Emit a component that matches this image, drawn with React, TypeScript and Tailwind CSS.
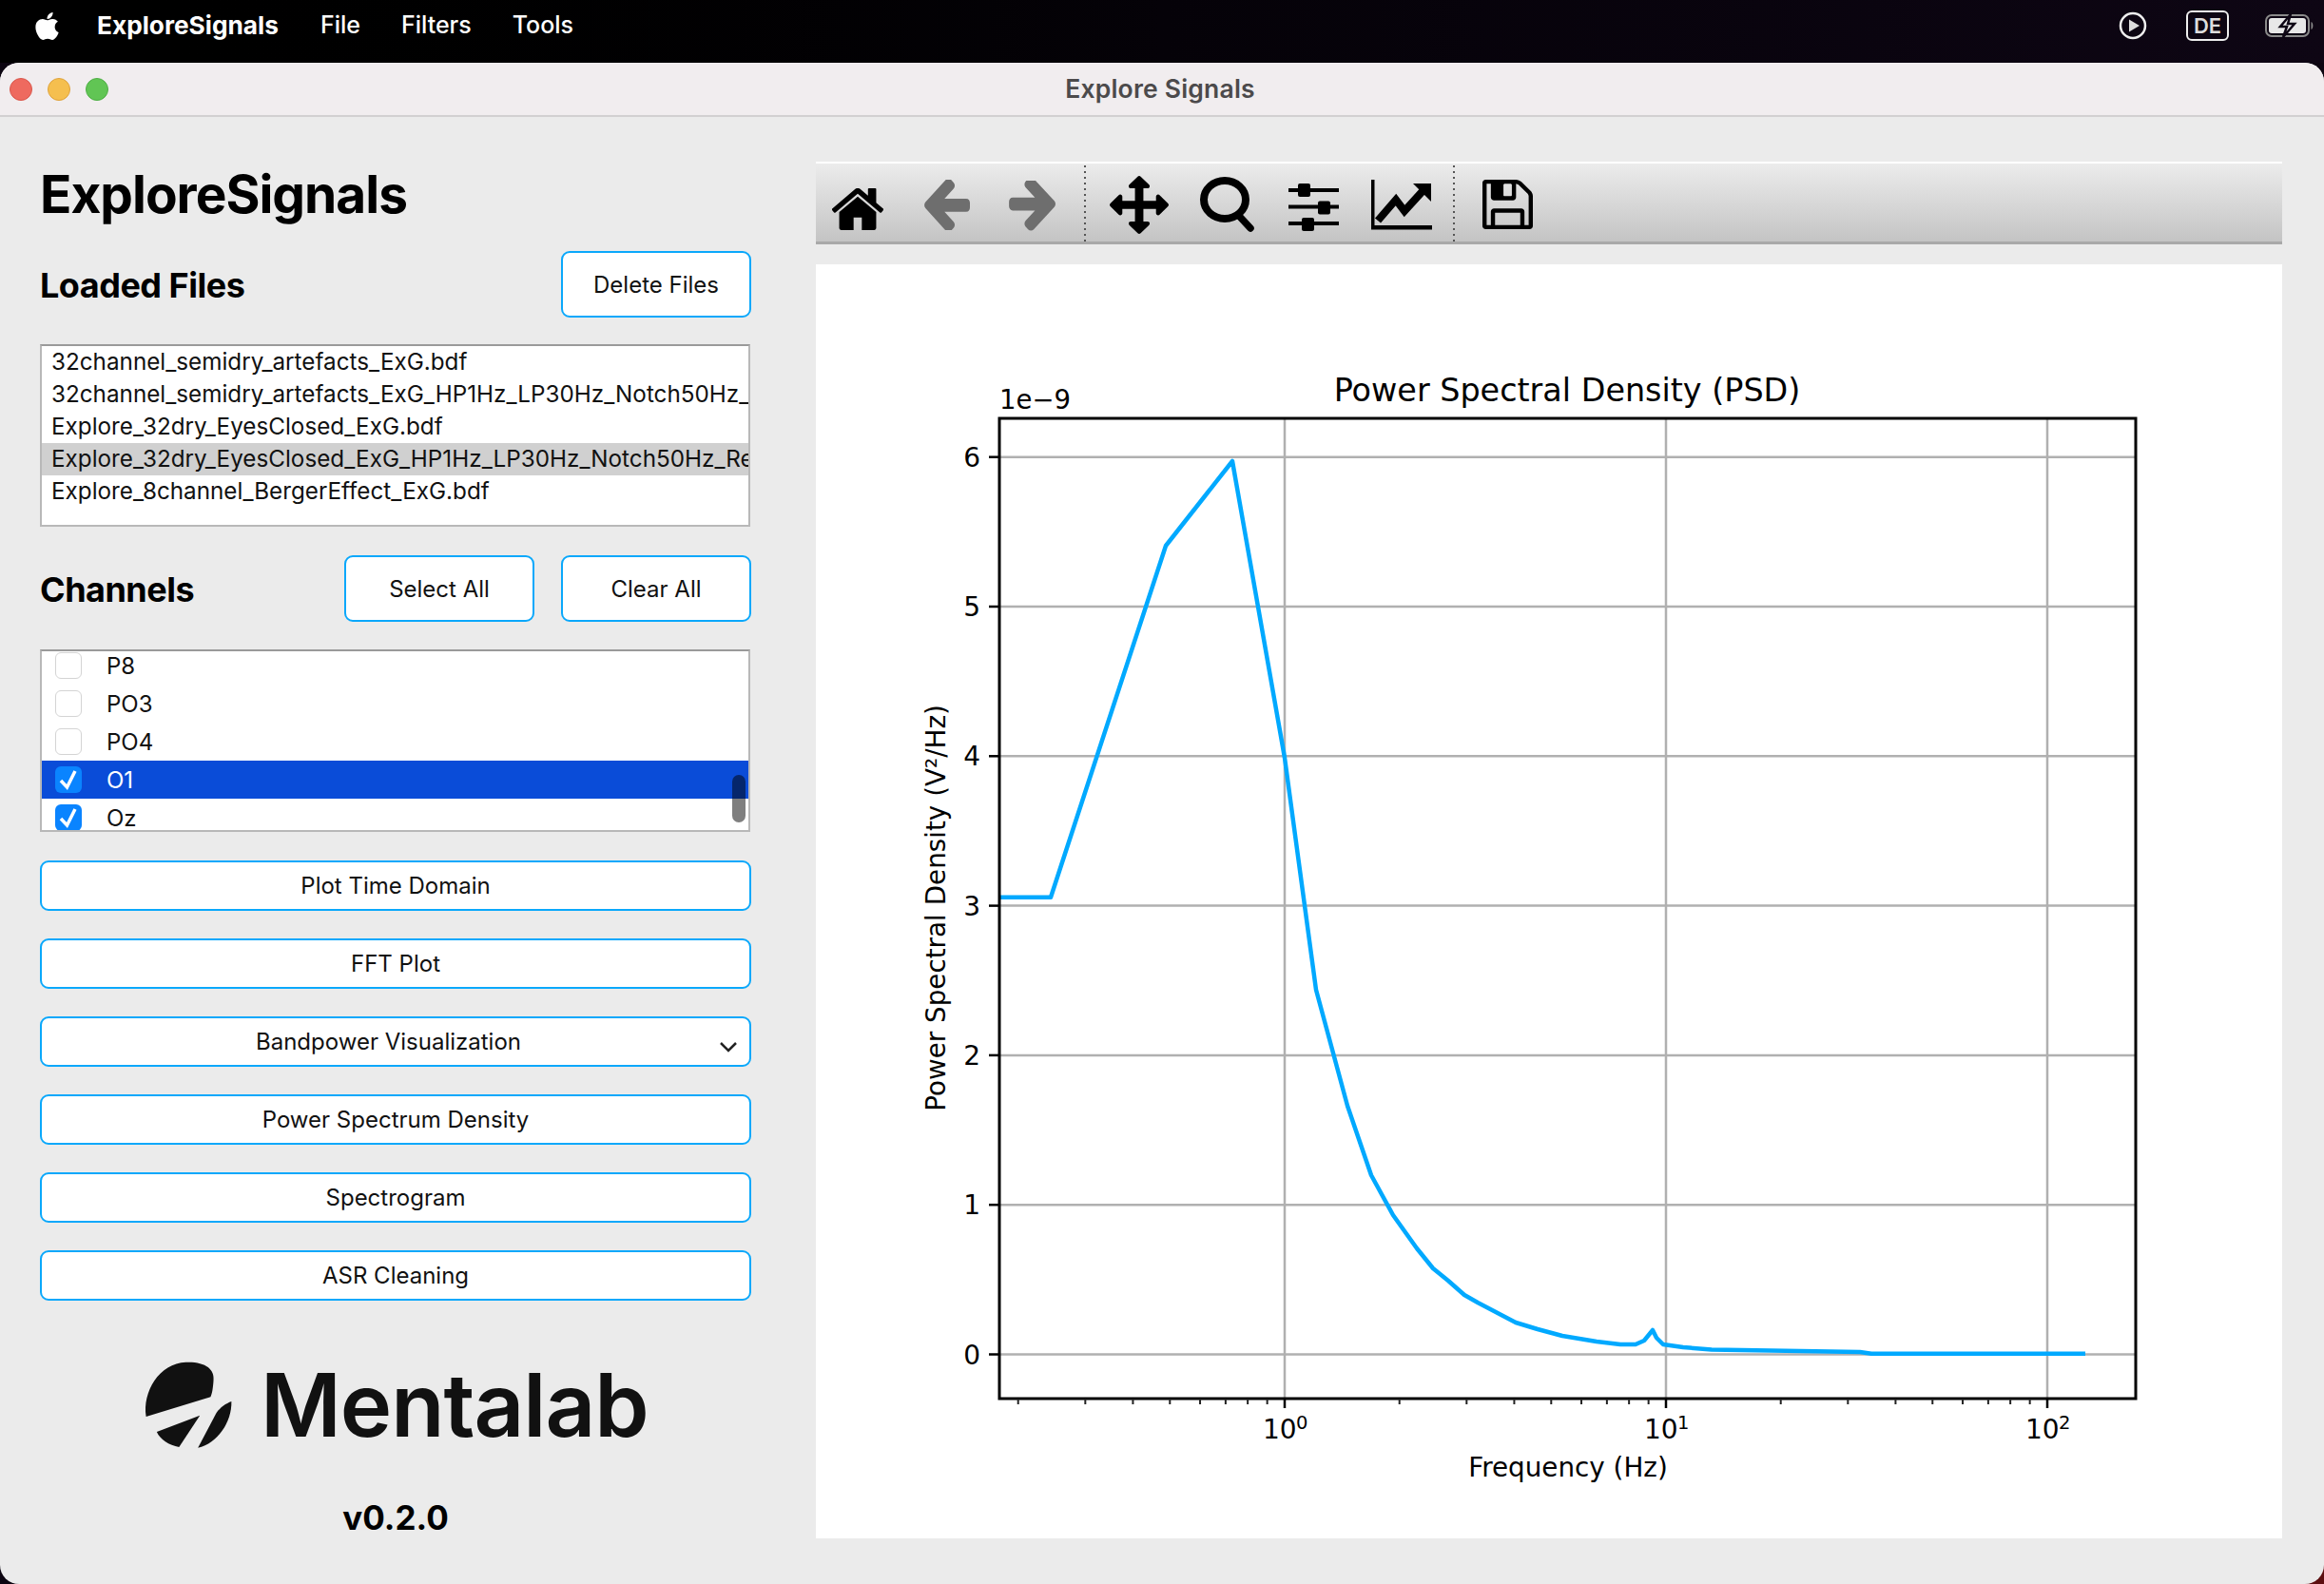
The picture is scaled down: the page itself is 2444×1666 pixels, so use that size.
import { FaApple } from "react-icons/fa";

const files = [
  "32channel_semidry_artefacts_ExG.bdf",
  "32channel_semidry_artefacts_ExG_HP1Hz_LP30Hz_Notch50Hz_Resampled.bdf",
  "Explore_32dry_EyesClosed_ExG.bdf",
  "Explore_32dry_EyesClosed_ExG_HP1Hz_LP30Hz_Notch50Hz_Resampled.bdf",
  "Explore_8channel_BergerEffect_ExG.bdf",
];

const channels = [
  { name: "P8", checked: false },
  { name: "PO3", checked: false },
  { name: "PO4", checked: false },
  { name: "O1", checked: true, active: true },
  { name: "Oz", checked: true },
];

const curve =
  "1051,943.7 1105,943.7 1226,574 1296,485 1351,797 1384,1041 1417,1163 1442,1236 1465,1278 1490,1313 1507,1334 1523,1347 1540,1362 1554,1370 1594,1391 1617,1398 1643,1405 1679,1411 1704,1414 1720,1414 1729,1410 1738,1399 1742,1407 1749,1414 1770,1417 1800,1419.5 1956,1422 1968,1423.7 2193,1423.7";

const yTicks = [0, 1, 2, 3, 4, 5, 6];
const yPos = (v: number) => 1424.5 - v * 157.3;
const decades = [
  { x: 1351, exp: "0" },
  { x: 1752, exp: "1" },
  { x: 2153, exp: "2" },
];

// minor log ticks between x = 1051 and x = 2246
const minorTicks: number[] = [];
[-1, 0, 1, 2].forEach((d) => {
  [2, 3, 4, 5, 6, 7, 8, 9].forEach((k) => {
    const x = 1351 + 401 * (d + Math.log10(k));
    if (x > 1051 && x < 2246) minorTicks.push(x);
  });
});

function ActionButton({ label }: { label: string }) {
  return (
    <button className="flex h-[53px] w-full items-center justify-center rounded-[9px] border-2 border-[#0aa8fb] bg-white text-[24px] text-[#111]">
      {label}
    </button>
  );
}

function SmallButton({ label }: { label: string }) {
  return (
    <button className="flex h-[70px] w-[200px] items-center justify-center rounded-[9px] border-2 border-[#0aa8fb] bg-white pt-[1px] text-[24px] text-[#111]">
      {label}
    </button>
  );
}

function Toolbar() {
  return (
    <div className="flex h-[87px] w-full border-t-2 border-b-[3px] border-t-white border-b-[#a9a9a9] bg-gradient-to-b from-[#ececec] to-[#c4c4c4]">
      <svg width="1542" height="82" viewBox="858 172 1542 82">
        <g fill="#000">
          <svg x="875" y="198" width="54" height="44" viewBox="96 256 1600 1280" preserveAspectRatio="none">
            <path d="M1472 992v480q0 26-19 45t-45 19h-384v-384h-256v384h-384q-26 0-45-19t-19-45v-480q0-1 .5-3t.5-3l575-474 575 474q1 2 1 6zm223-69l-62 74q-8 9-21 11h-3q-13 0-21-7l-692-577-692 577q-12 8-24 7-13-2-21-11l-62-74q-8-10-7-23.500t11-21.500l719-599q32-26 76-26t76 26l244 204v-195q0-14 9-23t23-9h192q14 0 23 9t9 23v408l219 182q10 8 11 21.500t-7 23.500z" />
          </svg>
          <svg x="970" y="189" width="50" height="53" viewBox="128 211 1536 1478" preserveAspectRatio="none">
            <path fill="#6e6e6e" d="M1664 896v128q0 53-32.500 90.500t-84.500 37.500h-704l293 294q38 36 38 90t-38 90l-75 76q-37 37-90 37-52 0-91-37l-651-652q-37-37-37-90 0-52 37-91l651-650q38-38 91-38 52 0 90 38l75 74q38 38 38 91t-38 91l-293 293h704q52 0 84.500 37.500t32.500 90.500z" />
          </svg>
          <svg x="1059" y="190" width="51" height="53" viewBox="128 211 1536 1478" preserveAspectRatio="none">
            <path fill="#6e6e6e" d="M1600 960q0 54-37 91l-651 651q-39 37-91 37-51 0-90-37l-75-75q-38-38-38-91t38-91l293-293h-704q-52 0-84.500-37.500t-32.500-90.500v-128q0-53 32.500-90.500t84.500-37.500h704l-293-294q-38-36-38-90t38-90l75-75q38-38 90-38 53 0 91 38l651 651q37 35 37 90z" transform="translate(64 -64)" />
          </svg>
          <svg x="1167" y="185" width="62" height="61" viewBox="0 0 1792 1792" preserveAspectRatio="none">
            <path d="M1792 896q0 26-19 45l-256 256q-19 19-45 19t-45-19-19-45v-128h-384v384h128q26 0 45 19t19 45-19 45l-256 256q-19 19-45 19t-45-19l-256-256q-19-19-19-45t19-45 45-19h128v-384h-384v128q0 26-19 45t-45 19-45-19l-256-256q-19-19-19-45t19-45l256-256q19-19 45-19t45 19 19 45v128h384v-384h-128q-26 0-45-19t-19-45 19-45l256-256q19-19 45-19t45 19l256 256q19 19 19 45t-19 45-45 19h-128v384h384v-128q0-26 19-45t45-19 45 19l256 256q19 19 19 45z" />
          </svg>
          <ellipse cx="1288" cy="210" rx="22" ry="20" fill="none" stroke="#000" strokeWidth="8" />
          <line x1="1303" y1="227" x2="1315" y2="240" stroke="#000" strokeWidth="7.500" strokeLinecap="round" />
          <rect x="1355" y="198" width="53" height="4" />
          <rect x="1355" y="215.500" width="53" height="4" />
          <rect x="1355" y="233" width="53" height="4" />
          <rect x="1365" y="193" width="13" height="14" rx="2" />
          <rect x="1386" y="211.500" width="13" height="14" rx="2" />
          <rect x="1369" y="229" width="13" height="14" rx="2" />
          <rect x="1442" y="189" width="3.500" height="52" />
          <rect x="1442" y="237" width="64" height="4.500" />
          <polyline points="1449,232 1468,210 1477,222 1497,200" fill="none" stroke="#000" strokeWidth="8" />
          <polygon points="1505,193 1505,212 1486,193" />
          <svg x="1559" y="189" width="53" height="52" viewBox="128 128 1536 1536" preserveAspectRatio="none">
            <path d="M512 1536h768v-384h-768v384zm896 0h128v-896q0-14-10-38.500t-20-34.500l-281-281q-10-10-34-20t-39-10v416q0 40-28 68t-68 28h-576q-40 0-68-28t-28-68v-416h-128v1280h128v-416q0-40 28-68t68-28h832q40 0 68 28t28 68v416zm-384-928v-320q0-13-9.500-22.500t-22.500-9.500h-192q-13 0-22.500 9.500t-9.500 22.500v320q0 13 9.500 22.500t22.500 9.500h192q13 0 22.500-9.500t9.500-22.500zm640 32v928q0 40-28 68t-68 28h-1344q-40 0-68-28t-28-68v-1344q0-40 28-68t68-28h928q40 0 88 20t76 48l280 280q28 28 48 76t20 88z" />
          </svg>
        </g>
        <line x1="1141" y1="174" x2="1141" y2="254" stroke="#555" strokeWidth="2" strokeDasharray="2 4" />
        <line x1="1529" y1="174" x2="1529" y2="254" stroke="#555" strokeWidth="2" strokeDasharray="2 4" />
      </svg>
    </div>
  );
}

function PsdChart() {
  return (
    <svg
      width="1542"
      height="1340"
      viewBox="858 278 1542 1340"
      className="block [font-family:'DejaVu_Sans',sans-serif]"
      fill="#000"
    >
      {/* grid */}
      {yTicks.map((v) => (
        <line key={v} x1="1051" x2="2246" y1={yPos(v)} y2={yPos(v)} stroke="#b0b0b0" strokeWidth="2.500" />
      ))}
      {decades.map((d) => (
        <line key={d.exp} x1={d.x} x2={d.x} y1="440" y2="1470" stroke="#b0b0b0" strokeWidth="2.500" />
      ))}
      <polyline points={curve} fill="none" stroke="#00a9ff" strokeWidth="4.500" strokeLinejoin="round" />
      <rect x="1051" y="440" width="1195" height="1031" fill="none" stroke="#000" strokeWidth="3" />

      {/* y axis */}
      {yTicks.map((v) => (
        <g key={v}>
          <line x1="1040" x2="1051" y1={yPos(v)} y2={yPos(v)} stroke="#000" strokeWidth="2.500" />
          <text x="1031" y={yPos(v) + 10} textAnchor="end" fontSize="28">
            {v}
          </text>
        </g>
      ))}

      {/* x axis */}
      {minorTicks.map((x) => (
        <line key={x} x1={x} x2={x} y1="1471" y2="1477" stroke="#222" strokeWidth="2" />
      ))}
      {decades.map((d) => (
        <g key={d.exp}>
          <line x1={d.x} x2={d.x} y1="1471" y2="1481" stroke="#000" strokeWidth="2.500" />
          <text x={d.x - 23} y="1513" fontSize="28">
            10
          </text>
          <text x={d.x + 12} y="1503" fontSize="19.500">
            {d.exp}
          </text>
        </g>
      ))}

      <text x="1649" y="1552.500" textAnchor="middle" fontSize="27.800">
        Frequency (Hz)
      </text>
      <text x="1648" y="421.500" textAnchor="middle" fontSize="33.400">
        Power Spectral Density (PSD)
      </text>
      <text x="1051" y="430" fontSize="27.500">
        1e−9
      </text>
      <text transform="translate(994 955) rotate(-90)" textAnchor="middle" fontSize="27.800">
        Power Spectral Density (V²/Hz)
      </text>
    </svg>
  );
}

function MentalabLogo() {
  return (
    <div className="mt-[62px] flex h-[96px] items-center pl-[105px]">
      <svg width="102" height="96" viewBox="250 975 200 240" preserveAspectRatio="none" fill="#111">
        <path d="M263 1125 C255 1060 290 985 345 982 C385 980 405 1000 402 1030 C401 1050 399 1065 396 1073 Z" />
        <path d="M285 1165 L374 1122 L331 1205 C310 1200 292 1185 285 1165 Z" />
        <path d="M370 1207 L408 1115 C416 1100 428 1090 439 1085 C440 1140 410 1195 370 1207 Z" />
      </svg>
      <span className="ml-[25px] text-[92px] leading-none font-semibold tracking-[-1px] text-[#111]">Mentalab</span>
    </div>
  );
}

export default function App() {
  return (
    <div className="relative flex h-[1666px] w-[2444px] flex-col overflow-hidden bg-[#0c0511] [font-family:Inter,sans-serif]">
      {/* wallpaper showing at the window's corner and top edge */}
      <div className="absolute right-0 bottom-0 h-[22px] w-[22px] bg-[#5c0f10]" />
      <div className="absolute top-[64px] left-0 h-[2px] w-full bg-gradient-to-r from-[#0c0511] via-[#2a1030] to-[#102a50]" />

      {/* macOS menu bar */}
      <div className="relative flex h-[66px] shrink-0 items-center bg-gradient-to-r from-black via-[#050208] to-[#0e0614] pb-[12px] text-[25px] text-white">
        <FaApple className="ml-[33px] h-[33px] w-[33px]" />
        <span className="ml-[36px] text-[26.250px] font-bold">ExploreSignals</span>
        <span className="ml-[44px] font-medium">File</span>
        <span className="ml-[43px] font-medium">Filters</span>
        <span className="ml-[43px] font-medium">Tools</span>
        <svg width="30" height="30" viewBox="0 0 30 30" className="mr-[-2px] ml-auto" fill="none">
          <circle cx="15" cy="15" r="13" stroke="#eee" strokeWidth="2.500" />
          <path d="M11 8.500 L22 15 L11 21.500 Z" fill="#ddd" />
        </svg>
        <div className="ml-[43px] flex h-[32px] w-[45px] items-center justify-center rounded-[6px] border-2 border-[#eee] text-[22px] font-semibold text-[#ddd]">
          DE
        </div>
        <svg width="52" height="26" viewBox="0 0 52 26" className="mr-[10px] ml-[38px]">
          <rect x="1" y="2" width="45" height="22" rx="6" fill="none" stroke="#8a8a8a" strokeWidth="2" />
          <rect x="4" y="5" width="39" height="16" rx="3" fill="#e8e8e8" />
          <path d="M48.500 9 C51 10 51 16 48.500 17 Z" fill="#8a8a8a" />
          <path d="M27 1 L16 14 L23 14 L19 25 L31 11 L24 11 Z" fill="#e8e8e8" stroke="#0e0614" strokeWidth="2.500" />
        </svg>
      </div>

      {/* app window */}
      <div className="relative flex min-h-0 flex-1 flex-col overflow-hidden rounded-[20px] bg-[#ebebeb] text-[#111]">
        <div className="relative flex h-[57px] shrink-0 items-center justify-center border-b-2 border-[#d2d0d1] bg-[#f1edef] pr-[4px]">
          <div className="absolute top-[16px] left-[10px] flex gap-[16px]">
            <div className="h-[24px] w-[24px] rounded-full border border-[#d9574c] bg-[#ee6a5f]" />
            <div className="h-[24px] w-[24px] rounded-full border border-[#dea23c] bg-[#f5bf4f]" />
            <div className="h-[24px] w-[24px] rounded-full border border-[#4fae46] bg-[#61c554]" />
          </div>
          <span className="text-[26.500px] tracking-[0.2px] font-semibold text-[#4c4a4b]">Explore Signals</span>
        </div>

        <div className="flex min-h-0 flex-1 pl-[42px]">
          {/* left panel */}
          <div className="flex w-[748px] shrink-0 flex-col pt-[49px]">
            <h1 className="h-[64px] text-[55px] leading-[64px] font-bold tracking-[-1px] text-black">
              ExploreSignals
            </h1>
            <div className="mt-[28px] flex items-center justify-between">
              <h2 className="pt-[2px] text-[36px] font-bold tracking-[-0.500px] text-black">Loaded Files</h2>
              <SmallButton label="Delete Files" />
            </div>

            <div className="mt-[28px] h-[192px] w-[747px] overflow-hidden border-2 border-[#b8b8b8] border-t-[#9a9a9a] bg-white text-[24.250px]">
              {files.map((f, i) => (
                <div
                  key={f}
                  className={`h-[34px] overflow-hidden pl-[10px] leading-[34px] whitespace-nowrap ${i === 3 ? "bg-[#d0d0d0]" : ""}`}
                >
                  {f}
                </div>
              ))}
            </div>

            <div className="mt-[30px] flex items-center">
              <h2 className="mr-auto pt-[2px] text-[36px] font-bold tracking-[-0.500px] text-black">Channels</h2>
              <SmallButton label="Select All" />
              <div className="w-[28px]" />
              <SmallButton label="Clear All" />
            </div>

            <div className="relative mt-[29px] h-[192px] w-[747px] overflow-hidden border-2 border-[#b8b8b8] border-t-[#9a9a9a] bg-white text-[24px]">
              <div className="mt-[-5px]">
                {channels.map((c) => (
                  <div
                    key={c.name}
                    className={`flex h-[40px] items-center pl-[14px] ${c.active ? "bg-[#0a4cd8] text-white" : ""}`}
                  >
                    {c.checked ? (
                      <div className="flex h-[28px] w-[28px] items-center justify-center rounded-[6px] bg-[#0a84ff]">
                        <svg width="28" height="28" viewBox="0 0 28 28" fill="none">
                          <path d="M6 15 L12.500 22 L21 5" stroke="#fff" strokeWidth="3.500" />
                        </svg>
                      </div>
                    ) : (
                      <div className="h-[28px] w-[28px] rounded-[6px] border border-[#d4d4d4] bg-white" />
                    )}
                    <span className="ml-[26px] pt-[1px]">{c.name}</span>
                  </div>
                ))}
              </div>
              {/* scrollbar thumb */}
              <div className="absolute top-[130px] left-[726px] h-[50px] w-[14px] rounded-full bg-black/50" />
            </div>

            <div className="mt-[30px] flex flex-col gap-[29px]">
              <ActionButton label="Plot Time Domain" />
              <ActionButton label="FFT Plot" />
              <button className="relative flex h-[53px] w-full items-center justify-center rounded-[9px] border-2 border-[#0aa8fb] bg-white pr-[15px] text-[24px] text-[#111]">
                Bandpower Visualization
                <svg width="20" height="12" viewBox="0 0 20 12" fill="none" className="absolute top-[24px] right-[12px]">
                  <path d="M2 2 L10 10 L18 2" stroke="#222" strokeWidth="2.500" />
                </svg>
              </button>
              <ActionButton label="Power Spectrum Density" />
              <ActionButton label="Spectrogram" />
              <ActionButton label="ASR Cleaning" />
            </div>

            <MentalabLogo />
            <div className="mt-[50px] text-center text-[35px] leading-[40px] font-bold text-black">v0.2.0</div>
          </div>

          {/* right panel */}
          <div className="ml-[68px] flex w-[1542px] shrink-0 flex-col pt-[47px]">
            <Toolbar />
            <div className="mt-[21px] h-[1340px] bg-white">
              <PsdChart />
            </div>
          </div>
        </div>
      </div>
    </div>
  );
}
